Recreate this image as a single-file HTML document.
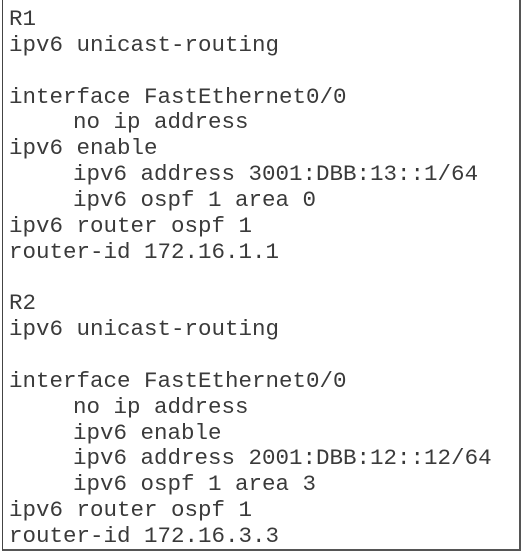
<!DOCTYPE html>
<html><head><style>
html,body{margin:0;padding:0;background:#fff;}
body{width:525px;height:556px;position:relative;overflow:hidden;}
.box{position:absolute;left:2px;top:-2px;width:519px;height:553px;border:1px solid #444;border-top:none;border-right:2px solid #555;border-bottom:2px solid #555;box-sizing:border-box;}
pre{position:absolute;left:9px;top:7px;margin:0;font-family:"Liberation Mono","Courier New",monospace;font-size:22.5px;line-height:25.85px;color:#3a3a3a;}
.i{padding-left:64px;}
</style></head><body>
<div class="box"></div>
<pre>R1
ipv6 unicast-routing

interface FastEthernet0/0
<span class="i">no ip address</span>
ipv6 enable
<span class="i">ipv6 address 3001:DBB:13::1/64</span>
<span class="i">ipv6 ospf 1 area 0</span>
ipv6 router ospf 1
router-id 172.16.1.1

R2
ipv6 unicast-routing

interface FastEthernet0/0
<span class="i">no ip address</span>
<span class="i">ipv6 enable</span>
<span class="i">ipv6 address 2001:DBB:12::12/64</span>
<span class="i">ipv6 ospf 1 area 3</span>
ipv6 router ospf 1
router-id 172.16.3.3</pre>
</body></html>
